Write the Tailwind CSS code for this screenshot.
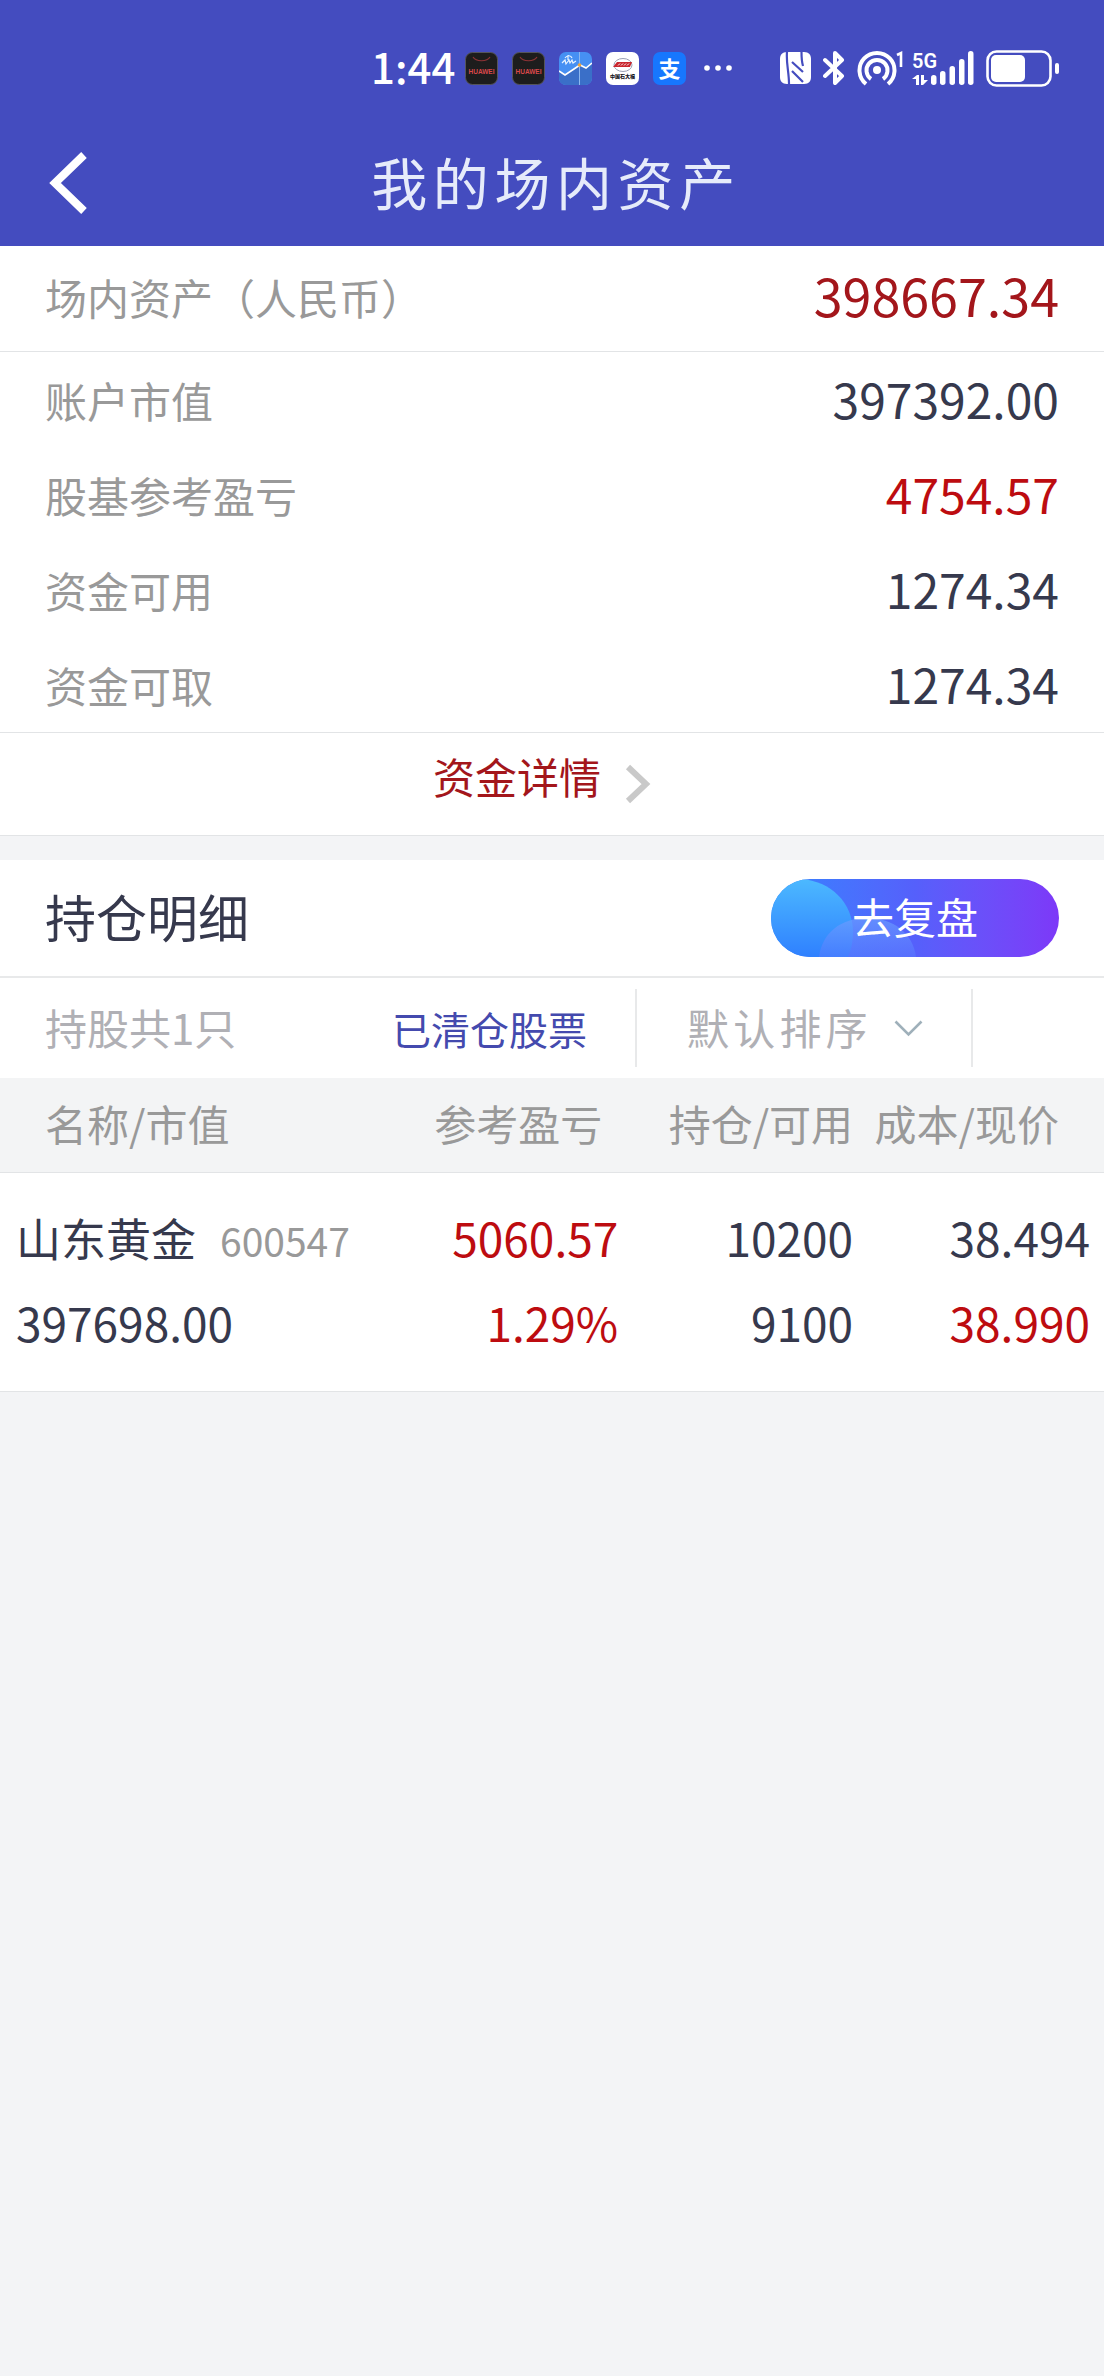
<!DOCTYPE html>
<html lang="zh-CN">
  <head>
    <meta charset="UTF-8" />
    <meta name="viewport" content="width=device-width, initial-scale=1.0" />
    <title>我的场内资产</title>
    <script src="https://cdn.jsdelivr.net/npm/@tailwindcss/browser@4"></script>
  </head>
  <body class="min-h-screen bg-[#f3f4f6] text-[#36394d] font-['Noto_Sans_CJK_SC',sans-serif]">
    <header class="bg-[#444cbf] text-white">
      <!-- Status bar -->
      <div class="flex h-[120px] items-center justify-between pt-4 pr-11 pl-[371px]">
        <div class="flex items-center gap-[14px]">
          <span class="-mr-1 pb-1 text-[42px] leading-[62px] font-medium">1:44</span>
          <svg class="size-[33px]" viewBox="0 0 33 33">
            <rect x=".5" y=".5" width="32" height="32" rx="7" fill="#1d1d1d" stroke="#55555a" />
            <path d="M8 5c3 5 14 5 17 0" fill="none" stroke="#8e3336" stroke-width="1.2" />
            <text x="16.5" y="21.500" text-anchor="middle" font-family="Liberation Sans" font-size="6.500" font-weight="700" fill="#d8484a">HUAWEI</text>
          </svg>
          <svg class="size-[33px]" viewBox="0 0 33 33">
            <rect x=".5" y=".5" width="32" height="32" rx="7" fill="#1d1d1d" stroke="#55555a" />
            <path d="M8 5c3 5 14 5 17 0" fill="none" stroke="#8e3336" stroke-width="1.2" />
            <text x="16.5" y="21.500" text-anchor="middle" font-family="Liberation Sans" font-size="6.500" font-weight="700" fill="#d8484a">HUAWEI</text>
          </svg>
          <svg class="size-[33px]" viewBox="0 0 33 33">
            <rect width="33" height="33" rx="7" fill="#4690f3" />
            <path d="M0 19l6 4 15-10 6 3 6-5v15a7 7 0 0 1-7 7H7a7 7 0 0 1-7-7z" fill="#3a6fc8" />
            <path d="M0 19l6 4 15-10 6 3 6-5" fill="none" stroke="#fff" stroke-width="1.6" />
            <path d="M20.500 0v33" stroke="#8db8ef" stroke-width="1" />
            <path d="M3 11l3-3 1 4 3-4 1 3 2-3 1 3 3-2M6 6c2-3 6-3 7 0M9 3v5" fill="none" stroke="#e8f3ff" stroke-width="1.2" />
            <circle cx="20.500" cy="13" r="1.800" fill="#f0a53a" />
          </svg>
          <svg class="size-[33px]" viewBox="0 0 33 33">
            <rect width="33" height="33" rx="7" fill="#fff" />
            <ellipse cx="17" cy="13" rx="9" ry="6.500" fill="none" stroke="#9aa0b5" stroke-width="1" />
            <path d="M7 15l4-5h15l-2 5z" fill="#c9262e" />
            <path d="M12 13.500l2-2m1 2l2-2m1 2l2-2m1 2l2-2" stroke="#fff" stroke-width="1" />
            <text x="16.500" y="26" text-anchor="middle" font-family="Noto Sans CJK SC" font-size="5" font-weight="900" fill="#16161c">中国石大福</text>
          </svg>
          <svg class="size-[33px] overflow-visible" viewBox="0 0 33 33">
            <rect width="33" height="33" rx="7" fill="#1777fe" />
            <text x="16.500" y="25" text-anchor="middle" font-family="Noto Sans CJK SC" font-size="22" font-weight="700" fill="#fff">支</text>
          </svg>
          <svg class="ml-1 h-[6px] w-[28px]" viewBox="0 0 28 6" fill="#fff">
            <circle cx="3" cy="3" r="2.800" />
            <circle cx="14" cy="3" r="2.800" />
            <circle cx="25" cy="3" r="2.800" />
          </svg>
        </div>

        <div class="flex items-center gap-3">
          <!-- NFC -->
          <svg class="h-8 w-[31px]" viewBox="0 0 31 32">
            <path d="M7 0h17c5 0 7 3 7 7v18c0 4-2 7-7 7H7c-5 0-7-3-7-7V7c0-4 2-7 7-7z" fill="#fff" />
            <path d="M7 0c-1 11 2 20 2 32M12 10l11 10M12 19l11 11M21.500 0c0 5 0 9 1.500 14" fill="none" stroke="#444cbf" stroke-width="2.200" />
          </svg>
          <!-- Bluetooth -->
          <svg class="h-9 w-[22px]" viewBox="0 0 22 36" fill="none" stroke="#fff" stroke-width="4" stroke-linejoin="round" stroke-linecap="round">
            <path d="M2 10l17 16-7 7V3l7 7L2 26" />
          </svg>
          <!-- Hotspot -->
          <svg class="h-9 w-[47px]" viewBox="0 0 47 36" fill="none" stroke="#fff" stroke-width="4">
            <circle cx="20" cy="20" r="4" fill="#fff" stroke="none" />
            <path d="M14 29a10.500 10.500 0 1 1 12 0" />
            <path d="M9 34a17.500 17.500 0 1 1 22 0" />
            <path d="M40 5l4-2v14" stroke-width="2.600" />
          </svg>
          <!-- Mobile signal -->
          <svg class="-ml-1 h-9 w-[62px] overflow-visible" viewBox="0 0 62 36" fill="#fff">
            <text x="0" y="18" font-family="Roboto" font-size="20" font-weight="600">5G</text>
            <path d="M0 29l5-4h2v10H4v-6zM9 25h3v5h4l-5 5H9z" />
            <rect x="19" y="25" width="5.500" height="10" rx="2.700" />
            <rect x="28" y="21" width="5.500" height="14" rx="2.700" />
            <rect x="37.500" y="16" width="5.500" height="19" rx="2.700" />
            <rect x="47" y="9" width="5.500" height="26" rx="2.700" />
            <rect x="56" y="1" width="5.500" height="34" rx="2.700" />
          </svg>
          <!-- Battery -->
          <svg class="h-[37px] w-[74px]" viewBox="0 0 74 37">
            <rect x="1.500" y="1.500" width="63" height="34" rx="9" fill="none" stroke="#fff" stroke-width="2.600" />
            <rect x="5" y="5" width="34" height="27" rx="5" fill="#fff" />
            <rect x="69" y="13" width="4" height="11" rx="2" fill="#fff" />
          </svg>
        </div>
      </div>

      <!-- Title bar -->
      <div class="grid h-[126px] grid-cols-[1fr_auto_1fr] items-center">
        <button type="button" aria-label="返回" class="ml-[49px] w-[38px]">
          <svg class="h-[62px] w-[38px]" viewBox="0 0 38 62" fill="none" stroke="#fff" stroke-width="8">
            <path d="M35 3L6 31l29 28" />
          </svg>
        </button>
        <h1 class="pb-1 pl-2 text-[56px] tracking-widest text-[#e6ebfa]">我的场内资产</h1>
      </div>
    </header>

    <main>
      <!-- Account summary -->
      <section class="border-b border-[#e2e4e6] bg-white">
        <dl>
          <div class="flex h-[106px] items-center justify-between border-b border-[#e2e4e6] px-[45px]">
            <dt class="pb-1 text-[42px] text-[#999999]">场内资产（人民币）</dt>
            <dd class="pb-2 text-[52px] leading-none text-[#a3161b]">398667.34</dd>
          </div>
          <div class="flex h-[95px] items-center justify-between px-[45px]">
            <dt class="text-[42px] text-[#999999]">账户市值</dt>
            <dd class="pb-1 text-[48px] leading-none">397392.00</dd>
          </div>
          <div class="flex h-[95px] items-center justify-between px-[45px]">
            <dt class="text-[42px] text-[#999999]">股基参考盈亏</dt>
            <dd class="pb-1 text-[48px] leading-none text-[#bd0c10]">4754.57</dd>
          </div>
          <div class="flex h-[95px] items-center justify-between px-[45px]">
            <dt class="text-[42px] text-[#999999]">资金可用</dt>
            <dd class="pb-1 text-[48px] leading-none">1274.34</dd>
          </div>
          <div class="flex h-[95px] items-center justify-between px-[45px]">
            <dt class="text-[42px] text-[#999999]">资金可取</dt>
            <dd class="pb-1 text-[48px] leading-none">1274.34</dd>
          </div>
        </dl>
        <a href="#" class="flex h-[103px] items-center justify-center gap-6 border-t border-[#e2e4e6] pr-5 text-[42px] text-[#a3161b]">
          <span class="pb-4 leading-none">资金详情</span>
          <svg class="h-[40px] w-[26px]" viewBox="0 0 26 40" fill="none" stroke="#c9c9c9" stroke-width="6">
            <path d="M3 3l18 17L3 37" />
          </svg>
        </a>
      </section>

      <!-- Holdings -->
      <section class="mt-6 bg-white">
        <div class="flex h-[118px] items-center justify-between border-b-2 border-[#e8e9ea] px-[45px]">
          <h2 class="pb-1 text-[51px]">持仓明细</h2>
          <button type="button" class="relative h-[78px] w-[288px] overflow-hidden rounded-full bg-linear-to-r from-[#2f84ff] via-[#5560fb] to-[#7d38f8] pb-1 text-[42px] leading-none text-white">
            <svg class="absolute inset-0 h-full w-full" viewBox="0 0 288 78">
              <defs>
                <linearGradient id="bubble" x1="0" y1="0" x2="0" y2="1">
                  <stop offset="0" stop-color="#4cb9ff" />
                  <stop offset="1" stop-color="#2f80ff" />
                </linearGradient>
                <linearGradient id="bubbleSmall" x1="0" y1="0" x2="0" y2="1">
                  <stop offset="0" stop-color="#6d9dff" stop-opacity=".7" />
                  <stop offset="1" stop-color="#5a7cff" stop-opacity=".5" />
                </linearGradient>
              </defs>
              <path d="M0 0h30c30 2 52 24 52 53 0 10-2 18-5 25H0z" fill="url(#bubble)" />
              <path d="M48 78c3-24 22-39 48-39s46 15 49 39z" fill="url(#bubbleSmall)" />
            </svg>
            <span class="relative">去复盘</span>
          </button>
        </div>

        <div class="flex h-[100px] items-center">
          <p class="flex-1 pb-1 pl-[45px] text-[42px] text-[#b0b0b5]">持股共1只</p>
          <a href="#" class="mr-12 text-[39px] text-[#444aae]">已清仓股票</a>
          <div class="relative h-[78px] w-[338px] border-x-2 border-[#e8e9ea]">
            <select aria-label="排序" class="h-full w-full appearance-none bg-transparent pb-1 pl-[50px] text-[42px] tracking-widest text-[#b0b0b5]">
              <option>默认排序</option>
            </select>
            <svg class="pointer-events-none absolute top-[31px] right-12 h-[18px] w-[29px]" viewBox="0 0 29 18" fill="none" stroke="#9fb0ba" stroke-width="2.600">
              <path d="M1.500 1.500l13 13 13-13" />
            </svg>
          </div>
          <div class="w-[131px]"></div>
        </div>

        <table class="w-full table-fixed border-b border-[#e2e4e6]">
          <thead class="bg-[#f3f4f5] text-[42px] whitespace-nowrap text-[#999999]">
            <tr class="h-[94px] border-b border-[#e2e4e6]">
              <th class="w-[36%] pb-1 pl-[45px] text-left font-normal">名称/市值</th>
              <th class="w-[20%] pr-4 pb-1 text-right font-normal">参考盈亏</th>
              <th class="w-[22%] pr-2 pb-1 text-right font-normal">持仓/可用</th>
              <th class="w-[22%] pr-[45px] pb-1 text-right font-normal">成本/现价</th>
            </tr>
          </thead>
          <tbody class="text-[46px] leading-[85px] whitespace-nowrap">
            <tr>
              <td class="pt-[22px] pb-[26px] pl-4">
                <div class="flex h-[85px] items-baseline gap-6">
                  <span class="text-[45px]">山东黄金</span>
                  <span class="text-[39px] leading-none text-[#999999]">600547</span>
                </div>
                <div>397698.00</div>
              </td>
              <td class="pt-[22px] pb-[26px] text-right text-[#bd0c10]">
                <div>5060.57</div>
                <div>1.29%</div>
              </td>
              <td class="pt-[22px] pr-2 pb-[26px] text-right">
                <div>10200</div>
                <div>9100</div>
              </td>
              <td class="pt-[22px] pr-[14px] pb-[26px] text-right">
                <div>38.494</div>
                <div class="text-[#bd0c10]">38.990</div>
              </td>
            </tr>
          </tbody>
        </table>
      </section>
    </main>
  </body>
</html>
